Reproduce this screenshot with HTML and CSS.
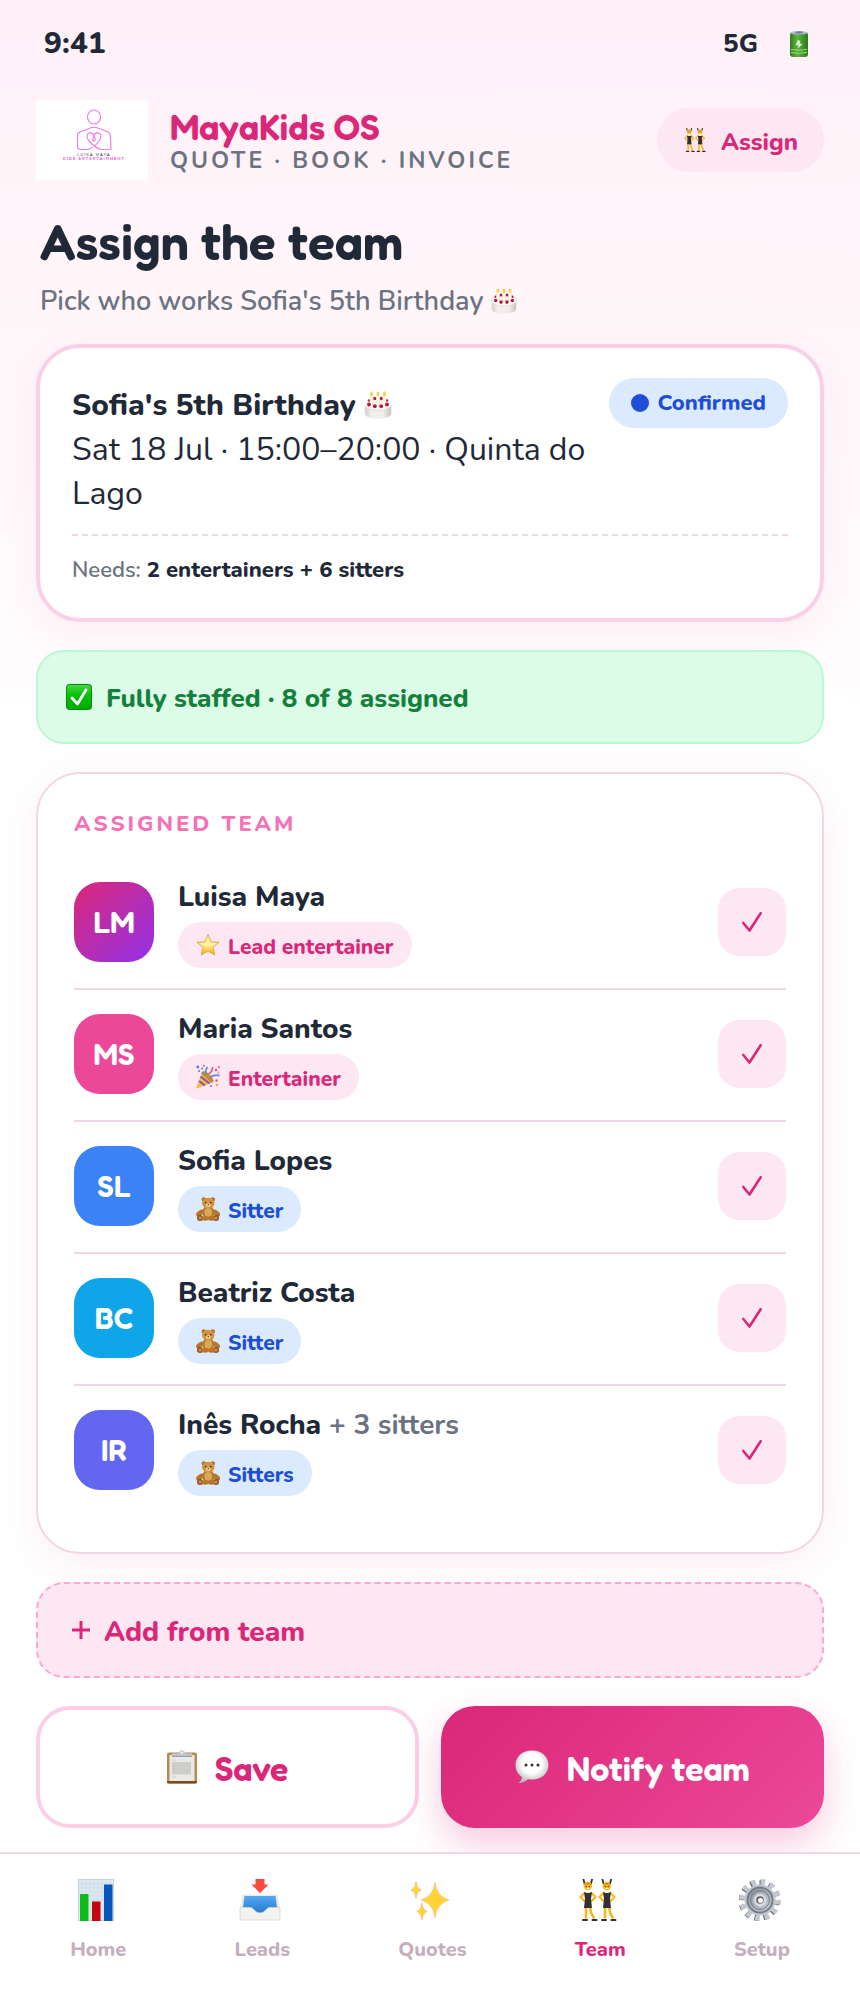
FILE: index.html
```html
<!DOCTYPE html>
<html lang="en">
<head>
<meta charset="utf-8">
<meta name="viewport" content="width=device-width, initial-scale=1">
<title>MayaKids OS</title>
<link rel="stylesheet" href="styles.css">
</head>
<body>
<svg class="sprite" aria-hidden="true">
  <defs>
    <linearGradient id="g-bat" x1="0" x2="1" y1="0" y2="0"><stop offset="0" stop-color="#2f7d1c"/><stop offset=".4" stop-color="#5cb63a"/><stop offset="1" stop-color="#2c7a1a"/></linearGradient>
    <linearGradient id="g-cake" x1="0" x2="1" y1="0" y2="0"><stop offset="0" stop-color="#d3cfc9"/><stop offset=".25" stop-color="#f2f0ed"/><stop offset=".7" stop-color="#f0eeeb"/><stop offset="1" stop-color="#c9c4bd"/></linearGradient>
    <linearGradient id="g-ok" x1="0" x2="0" y1="0" y2="1"><stop offset="0" stop-color="#45d84a"/><stop offset=".4" stop-color="#06c206"/><stop offset="1" stop-color="#00ab00"/></linearGradient>
    <linearGradient id="g-star" x1="0" x2="0" y1="0" y2="1"><stop offset="0" stop-color="#fff6b8"/><stop offset=".5" stop-color="#fff3a0"/><stop offset="1" stop-color="#f5a800"/></linearGradient>
    <radialGradient id="g-bub" cx=".5" cy=".4" r=".6"><stop offset=".5" stop-color="#fff"/><stop offset="1" stop-color="#b9b9b9"/></radialGradient>
    <linearGradient id="g-tray" x1="0" x2="0" y1="0" y2="1"><stop offset="0" stop-color="#55a8f5"/><stop offset="1" stop-color="#2179cb"/></linearGradient>
    <linearGradient id="g-gear" x1="0" x2="1" y1="0" y2="1"><stop offset="0" stop-color="#8b929c"/><stop offset="1" stop-color="#cdd3dc"/></linearGradient>
    <symbol id="i-battery" viewBox="0 0 18 26"><rect x="0" y="1" width="18" height="25" rx="3" fill="url(#g-bat)"/><ellipse cx="9" cy="1.800" rx="8.500" ry="1.800" fill="#aebfd6"/><ellipse cx="9" cy="1.500" rx="4" ry="1.200" fill="#7286a5"/><path d="M8 9 5.500 14l3 .5L8 17.500l4.500-4.500-3-.5 1-2.500z" fill="#d9f0cf"/><path d="M1 18.500q8 1.500 16 0M1 21.500q8 1.500 16 0" stroke="#a6d592" stroke-width="1" fill="none"/></symbol>
    <symbol id="i-dancers" viewBox="0 0 38 42"><g id="dancer"><path d="M5.500 4.500 4.500.5M12 4.500 13 .5" stroke="#303034" stroke-width="1.800" stroke-linecap="round"/><circle cx="8.800" cy="7" r="4.300" fill="#fdbb22"/><path d="M4.800 6Q9 2 12.800 6Q9 4.500 4.800 6" fill="#b87a12"/><circle cx="7.300" cy="7.500" r=".7" fill="#4a3010"/><circle cx="10.300" cy="7.500" r=".7" fill="#4a3010"/><path d="M7.500 9.500h2.800" stroke="#fff" stroke-width="1"/><path d="M5.500 14 1.500 18l4 4M12.500 14l4 4-4 4" fill="none" stroke="#fdb515" stroke-width="2.200" stroke-linecap="round" stroke-linejoin="round"/><path d="M5 13q4 2 8 0l-1 7 1 9H5l1-9z" fill="#303034"/><path d="M7 29v10.500M11.200 29l1 5 3 5.500" fill="none" stroke="#fdb515" stroke-width="2.600"/><path d="M4 41h4M13.500 41h4" stroke="#303034" stroke-width="2" stroke-linecap="round"/></g><use href="#dancer" x="19"/></symbol>
    <symbol id="i-cake" viewBox="0 0 28 28"><path d="M.8 13v10q1.500 4.800 13.200 4.800T27.200 23V13z" fill="url(#g-cake)"/><ellipse cx="14" cy="13.500" rx="13.200" ry="6" fill="#faf9f7"/><path d="M.8 14.500q3.500 5 13.200 5t13.200-5" fill="none" stroke="#dcd8d2" stroke-width=".8"/><g fill="#b8173f"><circle cx="10.700" cy="7.500" r="1.700"/><circle cx="17.300" cy="7.500" r="1.700"/><circle cx="5" cy="9.500" r="1.300"/><circle cx="23" cy="9.500" r="1.300"/></g><path d="M7.500 14V5.500M14 14.500V5.500M20.500 14V5.500" stroke="#e9dfc4" stroke-width="3.600"/><path d="M7.500 14V5.500M14 14.500V5.500M20.500 14V5.500" stroke="#fff9e8" stroke-width="2.400"/><g fill="#b8173f"><circle cx="5" cy="13.500" r="1.900"/><circle cx="10.800" cy="15.200" r="1.900"/><circle cx="17.200" cy="15.200" r="1.900"/><circle cx="23" cy="13.500" r="1.900"/></g><path d="M7.500 0q3 3.500 0 5.500q-3-2 0-5.500M14 0q3 3.500 0 5.500q-3-2 0-5.500M20.500 0q3 3.500 0 5.500q-3-2 0-5.500" fill="#f2cf3f"/></symbol>
    <symbol id="i-ok" viewBox="0 0 26 26"><rect width="26" height="26" rx="4" fill="#078c0a"/><rect x="1" y="1" width="24" height="24" rx="3" fill="url(#g-ok)"/><path d="m6 14 5.500 6L20 6" fill="none" stroke="#fff" stroke-width="2.800" stroke-linecap="round" stroke-linejoin="round"/></symbol>
    <symbol id="i-star" viewBox="0 0 24 24"><path d="m12 1.500 3 7.300 8 .5-6.200 5 2 7.700L12 17.800 5.200 22l2-7.700L1 9.300l8-.5z" fill="url(#g-star)" stroke="#e2a83a" stroke-width="1" stroke-linejoin="round"/></symbol>
    <symbol id="i-party" viewBox="0 0 24 24"><path d="M6.500 6.500 17.500 17 1 23.500q-1 0-.7-1z" fill="#efc03a"/><path d="m4.500 11.500 9 7M3 16l6 4.500M6 7.500 16.500 17" stroke="#8b4cbf" stroke-width="2"/><ellipse cx="12" cy="11.500" rx="2.500" ry="7.500" transform="rotate(-45 12 11.500)" fill="#d08a22"/><path d="M10 10q-1-5 1.500-8M14 13q3-4 9.500-2.500" fill="none" stroke="#5f8fe0" stroke-width="1.800"/><path d="M12.500 9q4-2 4-7" fill="none" stroke="#e2588a" stroke-width="1.600"/><g fill="#4f7ee0"><circle cx="1.800" cy="2" r="1.400"/><circle cx="3" cy="6" r="1"/><circle cx="15" cy="21" r="1"/><circle cx="6" cy="3.500" r="1"/></g><g fill="#e8547f"><circle cx="20" cy="5" r="1.300"/><circle cx="23" cy="2" r="1"/><circle cx="20.500" cy="15.500" r="1.200"/><circle cx="8" cy="1" r="1"/></g><g fill="#e0a850"><circle cx="22.500" cy="7.500" r="1"/><circle cx="21" cy="20" r="1.300"/></g></symbol>
    <symbol id="i-bear" viewBox="0 0 24 24"><g fill="#b9762a"><circle cx="7.800" cy="2.500" r="2.300"/><circle cx="16.800" cy="2.500" r="2.300"/><ellipse cx="12.300" cy="15.500" rx="6" ry="6.500"/><ellipse cx="4" cy="16" rx="2.300" ry="4.500" transform="rotate(55 4 16)"/><ellipse cx="20.300" cy="16" rx="2.300" ry="4.500" transform="rotate(-55 20.300 16)"/></g><ellipse cx="12.300" cy="6.300" rx="6.200" ry="5.600" fill="#d0933f"/><ellipse cx="12.300" cy="15.500" rx="3.800" ry="4.200" fill="#dba955"/><circle cx="4" cy="21" r="3" fill="#8a4d18"/><circle cx="20" cy="21" r="3" fill="#8a4d18"/><ellipse cx="9" cy="21.500" rx="3.500" ry="2.200" fill="#b9762a"/><ellipse cx="15.500" cy="21.500" rx="3.500" ry="2.200" fill="#b9762a"/><circle cx="4" cy="21" r="1.700" fill="#c98d43"/><circle cx="20" cy="21" r="1.700" fill="#c98d43"/><ellipse cx="12.300" cy="8" rx="2.600" ry="2" fill="#efcb87"/><path d="M11.300 7.200h2l-1 1.200z" fill="#3a200c"/><circle cx="9.700" cy="5.800" r=".8" fill="#2c180a"/><circle cx="14.900" cy="5.800" r=".8" fill="#2c180a"/></symbol>
    <symbol id="i-clip" viewBox="0 0 30 34"><rect x="0" y="2.500" width="30" height="31" rx="2" fill="#b98a4c"/><path d="M0 31h30v1q0 1.500-2 1.500H2q-2 0-2-1.500z" fill="#7a4c1e"/><rect x="2.500" y="5" width="25" height="26" fill="#e9e9e7"/><path d="M5 10h4M5 27h4" stroke="#cfcfcc" stroke-width="1.200"/><rect x="5" y="12" width="19" height="12.500" fill="#cdcdcb"/><path d="M5 3.500h6.500Q12 .5 15 .3q3 .2 3.500 3.200H25v2.500H5z" fill="#c3ccd6"/><path d="M5 6.300h20" stroke="#87929d" stroke-width="1"/><circle cx="15" cy="2.600" r="1.100" fill="#f6f8fa"/></symbol>
    <symbol id="i-bubble" viewBox="0 0 34 34"><path d="M17 .5C7.500.5.500 6.500.5 15c0 5.500 2.700 9.500 6.500 12q-.5 4-3.500 6Q9 33 13 29.200q2 .3 4 .3c9.500 0 16.500-6 16.500-14.500S26.500.5 17 .5z" fill="url(#g-bub)"/><circle cx="11" cy="15" r="1.500" fill="#333"/><circle cx="17" cy="15" r="1.500" fill="#333"/><circle cx="23" cy="15" r="1.500" fill="#333"/></symbol>
    <symbol id="i-chart" viewBox="0 0 36 42"><rect x=".5" y=".5" width="35" height="41" fill="#dfe8f0" stroke="#c7d2dc"/><path d="M4 1v40M8 1v40M12 1v40M16 1v40M20 1v40M24 1v40M28 1v40M32 1v40M1 5h34M1 9h34M1 13h34M1 17h34M1 21h34M1 25h34M1 29h34" stroke="#cbd9e6" stroke-width=".6"/><path d="M2 15h8.500v27H2z" fill="#0dbc1b"/><path d="M14 22.500h8.500V42H14z" fill="#c50610"/><path d="M26 5.500h8.500V42H26z" fill="#0757bd"/></symbol>
    <symbol id="i-inbox" viewBox="0 0 42 42"><path d="M3.500 15.500h35L41 29H1z" fill="#e8e8e4"/><path d="M5.500 17h31l1.500 12-9 6H13l-9-6z" fill="url(#g-tray)"/><path d="M1 28.500h10.500c3 0 4.500 5.500 9.500 5.500s6.500-5.500 9.500-5.500H41V40q0 1-1 1H2q-1 0-1-1z" fill="#f3f2ef" stroke="#d7d5d0" stroke-width=".8"/><path d="M16.500 0h9v5.500h4L21 14 12.500 5.500h4z" fill="#f7493f"/></symbol>
    <symbol id="i-spark" viewBox="0 -2 42 42"><g fill="#fdd435" stroke="#f3b27c" stroke-width=".6"><path d="M26 1Q27.500 15.500 40 19 27.500 22.500 26 37 24.500 22.500 12 19 24.500 15.500 26 1z"/><path d="M7 .5q.8 7 5 8.500Q7.800 10.500 7 17.500 6.200 10.500 2 9 6.200 7.500 7 .5z"/><path d="M13 22q.8 7 5.300 8.500Q13.800 32 13 39 12.200 32 7.700 30.500 12.200 29 13 22z"/></g></symbol>
    <symbol id="i-gear" viewBox="0 0 42 42"><g transform="translate(-1 1)"><circle cx="21" cy="20.500" r="17.500" fill="none" stroke="#555b64" stroke-width="6" stroke-dasharray="4.400 4.763"/></g><circle cx="21" cy="21" r="18" fill="none" stroke="#c2c8d1" stroke-width="6" stroke-dasharray="4.600 4.825"/><circle cx="21" cy="21" r="15.500" fill="#bfc5ce"/><circle cx="21" cy="21" r="12.500" fill="url(#g-gear)" stroke="#747a84" stroke-width="1.800"/><circle cx="21" cy="21" r="9.500" fill="none" stroke="#717882" stroke-width="1"/><circle cx="21" cy="21" r="6.500" fill="#d5dae1"/><circle cx="21" cy="21" r="3.800" fill="#66606a"/><circle cx="21.500" cy="21.500" r="2.500" fill="#fff"/></symbol>
    <symbol id="i-tick" viewBox="0 0 20 20"><path d="m1.300 11 6.200 7.500L18.700 1.300" fill="none" stroke="currentColor" stroke-width="2.600" stroke-linecap="round" stroke-linejoin="round"/></symbol>
  </defs>
</svg>

<div class="app">
  <div class="status">
    <span class="clock">9:41</span>
    <span class="signal">5G <svg class="battery"><use href="#i-battery"/></svg></span>
  </div>

  <header class="brand">
    <svg class="logo" viewBox="0 0 112 80" role="img" aria-label="Luisa Maya Kids Entertainment">
      <rect width="112" height="80" fill="#fff"/>
      <g fill="none" stroke="#f07fdf" stroke-width="1.200" stroke-linecap="round">
        <ellipse cx="58" cy="17" rx="6.500" ry="7"/>
        <path d="M52 49.500H44.500q-3 0-3-4V35q0-2 3-3.200L54 28q4-1.500 8 0l9 3.500q3 1.200 3.400 4L75 49.500H65Q58 47 52.500 40.500C48 33 56 29.500 58 36c2-6.500 10-3 5.500 4.500Q59 47 52 49.500"/>
        <path d="M58 36q-2.500 4 0 5 2.500-1 0-5"/>
      </g>
      <text class="logo-name" x="58" y="56" text-anchor="middle">LUISA MAYA</text>
      <text class="logo-kind" x="58" y="60" text-anchor="middle">KIDS ENTERTAINMENT</text>
    </svg>
    <div class="brand-text">
      <div class="brand-name">MayaKids OS</div>
      <div class="brand-tag">QUOTE · BOOK · INVOICE</div>
    </div>
    <button class="mode mark" type="button"><svg class="e24"><use href="#i-dancers"/></svg>Assign</button>
  </header>

  <div class="intro">
    <h1>Assign the team</h1>
    <p>Pick who works Sofia's 5th Birthday <svg class="e26"><use href="#i-cake"/></svg></p>
  </div>

  <main class="stack">
    <section class="card event">
      <div class="event-top">
        <div class="event-info">
          <h2>Sofia's 5th Birthday <svg class="e28"><use href="#i-cake"/></svg></h2>
          <div>Sat 18 Jul · 15:00–20:00 · Quinta do Lago</div>
        </div>
        <span class="state"><i class="dot"></i>Confirmed</span>
      </div>
      <p class="needs">Needs: <b>2 entertainers + 6 sitters</b></p>
    </section>

    <div class="notice mark" role="status"><svg class="e26"><use href="#i-ok"/></svg>Fully staffed · 8 of 8 assigned</div>

    <section class="card team">
      <h3>ASSIGNED TEAM</h3>
      <ul>
        <li><span class="avatar lm">LM</span><div class="who"><div class="name">Luisa Maya</div><span class="role mark pink"><svg class="e24"><use href="#i-star"/></svg>Lead entertainer</span></div><button class="pick" type="button" aria-label="Luisa Maya assigned"><svg><use href="#i-tick"/></svg></button></li>
        <li><span class="avatar ms">MS</span><div class="who"><div class="name">Maria Santos</div><span class="role mark pink"><svg class="e24"><use href="#i-party"/></svg>Entertainer</span></div><button class="pick" type="button" aria-label="Maria Santos assigned"><svg><use href="#i-tick"/></svg></button></li>
        <li><span class="avatar sl">SL</span><div class="who"><div class="name">Sofia Lopes</div><span class="role mark blue"><svg class="e24"><use href="#i-bear"/></svg>Sitter</span></div><button class="pick" type="button" aria-label="Sofia Lopes assigned"><svg><use href="#i-tick"/></svg></button></li>
        <li><span class="avatar bc">BC</span><div class="who"><div class="name">Beatriz Costa</div><span class="role mark blue"><svg class="e24"><use href="#i-bear"/></svg>Sitter</span></div><button class="pick" type="button" aria-label="Beatriz Costa assigned"><svg><use href="#i-tick"/></svg></button></li>
        <li><span class="avatar ir">IR</span><div class="who"><div class="name">Inês Rocha <span class="more">+ 3 sitters</span></div><span class="role mark blue"><svg class="e24"><use href="#i-bear"/></svg>Sitters</span></div><button class="pick" type="button" aria-label="Inês Rocha assigned"><svg><use href="#i-tick"/></svg></button></li>
      </ul>
    </section>

    <button class="add mark" type="button"><svg class="plus" viewBox="0 0 18 18"><path d="M9 0v18M0 9h18" stroke="currentColor" stroke-width="3"/></svg>Add from team</button>

    <div class="actions">
      <button class="btn mark save" type="button"><svg class="clip"><use href="#i-clip"/></svg>Save</button>
      <button class="btn mark notify" type="button"><svg class="bubble"><use href="#i-bubble"/></svg>Notify team</button>
    </div>
  </main>

  <nav class="tabs">
    <a href="#home"><svg><use href="#i-chart"/></svg>Home</a>
    <a href="#leads"><svg><use href="#i-inbox"/></svg>Leads</a>
    <a href="#quotes"><svg><use href="#i-spark"/></svg>Quotes</a>
    <a href="#team" class="on" aria-current="page"><svg><use href="#i-dancers"/></svg>Team</a>
    <a href="#setup"><svg><use href="#i-gear"/></svg>Setup</a>
  </nav>
</div>
</body>
</html>
```

FILE: styles.css
```css
:root {
  --ink: #1f2937;
  --muted: #6b7280;
  --pink: #db2777;
  --pink-soft: #fce7f3;
  --line: #f3d6e6;
  --edge: #fbcfe8;
  --body: Nunito, Lato, "Open Sans", sans-serif;
  --display: Fredoka, Lato, "Open Sans", sans-serif;
}
* { box-sizing: border-box; }
body {
  margin: 0;
  background: #fff;
  color: var(--ink);
  font-family: var(--body);
  font-size: 32px;
  line-height: 44px;
}
h1, h2, h3, p, ul { margin: 0; padding: 0; }
button { border: 0; font: inherit; cursor: pointer; }
svg { flex: none; }
.sprite { position: absolute; width: 0; height: 0; }
.e24 { width: 24px; height: 24px; }
.e26 { width: 26px; height: 26px; vertical-align: -4px; }
.e28 { width: 28px; height: 28px; vertical-align: -4px; }
.app {
  min-height: 100vh;
  display: flex;
  flex-direction: column;
  background: linear-gradient(180deg, #fff0f7 0, #fff 800px);
}

/* icon + label rows: the icon sits a little above the label's middle */
.mark { display: flex; align-items: center; padding-top: 3px; padding-bottom: 0; }
.mark svg { margin-bottom: 3px; }

.status {
  display: flex;
  justify-content: space-between;
  align-items: center;
  padding: 22px 52px 0 44px;
  font-weight: 800;
}
.clock { font-size: 30px; }
.signal { display: flex; align-items: center; gap: 32px; font-size: 26px; }
.battery { width: 18px; height: 26px; }

.brand { display: flex; align-items: center; gap: 22px; padding: 34px 36px 0; }
.logo { width: 112px; height: 80px; }
.logo-name { font: 4px var(--body); letter-spacing: 1px; fill: #333; }
.logo-kind { font: 700 4px var(--body); letter-spacing: 1px; fill: #ee3fd0; }
.brand-text { flex: 1; padding-top: 4px; }
.brand-name { font: 600 36px/38px var(--display); color: var(--pink); }
.brand-tag { font-size: 23px; line-height: 30px; font-weight: 700; letter-spacing: 3px; color: var(--muted); }
.mode {
  gap: 14px;
  height: 64px;
  padding-left: 26px;
  padding-right: 26px;
  border-radius: 32px;
  background: var(--pink-soft);
  color: var(--pink);
  font-size: 24px;
  font-weight: 800;
}

.intro { padding: 32px 40px 18px; }
.intro h1 { font: 600 50px/60px var(--display); }
.intro p { margin-top: 10px; font-size: 27px; line-height: 40px; font-weight: 600; color: var(--muted); }

.stack { display: flex; flex-direction: column; gap: 28px; padding: 4px 36px 24px; }
.card {
  background: #fff;
  border: 2px solid var(--line);
  border-radius: 44px;
  box-shadow: 0 12px 40px rgba(219, 39, 119, .07);
}
.event { border: 4px solid var(--edge); padding: 30px 32px; }
.event-top { display: flex; align-items: flex-start; gap: 16px; }
.event-info { flex: 1; padding-top: 6px; }
.event h2 { font-size: 30px; line-height: 44px; font-weight: 800; }
.state {
  display: flex;
  align-items: center;
  gap: 8px;
  height: 50px;
  padding: 0 22px;
  border-radius: 25px;
  background: #dbeafe;
  color: #1d4ed8;
  font-size: 22px;
  font-weight: 800;
}
.dot { width: 18px; height: 18px; border-radius: 50%; background: currentColor; }
.needs {
  margin-top: 18px;
  padding-top: 16px;
  border-top: 2px dashed var(--line);
  font-size: 22px;
  line-height: 36px;
  font-weight: 600;
  color: var(--muted);
}
.needs b { color: var(--ink); font-weight: 800; }

.notice {
  gap: 14px;
  min-height: 94px;
  padding-left: 28px;
  padding-right: 28px;
  border: 2px solid #bbf7d0;
  border-radius: 28px;
  background: #dcfce7;
  color: #15803d;
  font-size: 26px;
  font-weight: 800;
}

.team { padding: 36px; }
.team h3 { padding-bottom: 20px; font-size: 22px; line-height: 28px; font-weight: 800; letter-spacing: 3px; color: #f472b6; }
.team ul { list-style: none; }
.team li { display: flex; align-items: center; gap: 24px; padding: 18px 0 20px; }
.team li + li { border-top: 2px solid var(--line); }
.avatar {
  display: grid;
  place-items: center;
  width: 80px;
  height: 80px;
  border-radius: 26px;
  color: #fff;
  font: 600 30px/36px var(--display);
}
.lm { background: linear-gradient(135deg, #db2777, #9333ea); }
.ms { background: #ec4899; }
.sl { background: #3b82f6; }
.bc { background: #0ea5e9; }
.ir { background: #6366f1; }
.who { flex: 1; display: flex; flex-direction: column; align-items: flex-start; gap: 4px; }
.name { font-size: 28px; line-height: 42px; font-weight: 800; }
.more { font-weight: 700; color: var(--muted); }
.role {
  gap: 8px;
  height: 46px;
  padding-left: 18px;
  padding-right: 18px;
  border-radius: 23px;
  font-size: 21px;
  font-weight: 800;
}
.pink { background: var(--pink-soft); color: var(--pink); }
.blue { background: #dbeafe; color: #1d4ed8; }
.pick {
  display: grid;
  place-items: center;
  width: 68px;
  height: 68px;
  padding: 0;
  border-radius: 22px;
  background: var(--pink-soft);
  color: var(--pink);
}
.pick svg { width: 20px; height: 20px; }

.add {
  gap: 14px;
  height: 96px;
  padding-left: 34px;
  padding-right: 34px;
  border: 2px dashed #f9a8d4;
  border-radius: 28px;
  background: var(--pink-soft);
  color: var(--pink);
  font-size: 28px;
  font-weight: 800;
}
.plus { width: 18px; height: 18px; }
.actions { display: grid; grid-template-columns: 1fr 1fr; gap: 22px; }
.btn {
  justify-content: center;
  gap: 18px;
  height: 122px;
  border-radius: 34px;
  font: 600 34px/44px var(--display);
}
.save { background: #fff; border: 4px solid var(--edge); color: var(--pink); }
.notify {
  background: linear-gradient(135deg, #db2777, #ec4899);
  color: #fff;
  box-shadow: 0 16px 36px rgba(219, 39, 119, .24);
}
.clip { width: 30px; height: 34px; }
.bubble { width: 34px; height: 34px; }

.tabs {
  position: relative;
  flex: 1;
  display: flex;
  justify-content: space-around;
  align-items: flex-start;
  padding: 25px 16px 20px;
  border-top: 2px solid var(--line);
  background: #fff;
}
.tabs a {
  display: flex;
  flex-direction: column;
  align-items: center;
  gap: 15px;
  color: #c4b0bc;
  font-size: 20px;
  line-height: 28px;
  font-weight: 800;
  text-decoration: none;
}
.tabs svg { width: 42px; height: 42px; margin-right: 4px; }
.tabs .on { color: var(--pink); }
```
